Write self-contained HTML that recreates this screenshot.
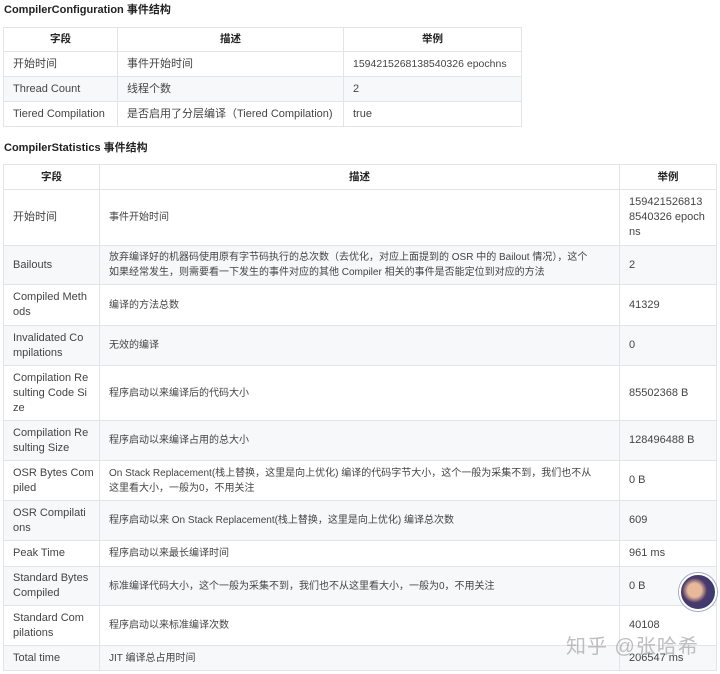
<!DOCTYPE html>
<html><head><meta charset="utf-8"><style>
body{margin:0;background:#fff;width:720px;height:674px;overflow:hidden;position:relative;font-family:"Liberation Sans","Noto Sans CJK SC",sans-serif;color:#444;font-size:11px}
.t{position:absolute;left:4px;font-weight:bold;font-size:11px;color:#222}
table{position:absolute;border-collapse:collapse;table-layout:fixed}
td,th{border:1px solid #e1e4e8;padding:0 9px;line-height:15px;vertical-align:middle;overflow:hidden;white-space:nowrap}
th{font-weight:bold;text-align:center;font-size:10.5px;color:#222}
.g{background:#f6f8fa}
.d{font-size:10px}
</style></head><body>
<div class="t" style="top:1px">CompilerConfiguration 事件结构</div>
<table style="left:3px;top:27px;width:518px">
<col style="width:114px"><col style="width:226px"><col style="width:178px">
<tr style="height:24px"><th>字段</th><th>描述</th><th>举例</th></tr>
<tr style="height:25px"><td>开始时间</td><td>事件开始时间</td><td style="font-size:10.5px">1594215268138540326 epochns</td></tr>
<tr style="height:25px" class="g"><td>Thread Count</td><td>线程个数</td><td>2</td></tr>
<tr style="height:25px"><td>Tiered Compilation</td><td>是否启用了分层编译（Tiered Compilation)</td><td>true</td></tr>
</table>
<div class="t" style="top:139px">CompilerStatistics 事件结构</div>
<table style="left:3px;top:164px;width:713px">
<col style="width:96px"><col style="width:520px"><col style="width:97px">
<tr style="height:25px"><th>字段</th><th>描述</th><th>举例</th></tr>
<tr style="height:56px"><td>开始时间</td><td class="d">事件开始时间</td><td>159421526813<br>8540326 epoch<br>ns</td></tr>
<tr style="height:39px" class="g"><td>Bailouts</td><td class="d">放弃编译好的机器码使用原有字节码执行的总次数（去优化，对应上面提到的 OSR 中的 Bailout 情况），这个<br>如果经常发生，则需要看一下发生的事件对应的其他 Compiler 相关的事件是否能定位到对应的方法</td><td>2</td></tr>
<tr style="height:41px"><td>Compiled Meth<br>ods</td><td class="d">编译的方法总数</td><td>41329</td></tr>
<tr style="height:40px" class="g"><td>Invalidated Co<br>mpilations</td><td class="d">无效的编译</td><td>0</td></tr>
<tr style="height:55px"><td>Compilation Re<br>sulting Code Si<br>ze</td><td class="d">程序启动以来编译后的代码大小</td><td>85502368 B</td></tr>
<tr style="height:40px" class="g"><td>Compilation Re<br>sulting Size</td><td class="d">程序启动以来编译占用的总大小</td><td>128496488 B</td></tr>
<tr style="height:40px"><td>OSR Bytes Com<br>piled</td><td class="d">On Stack Replacement(栈上替换，这里是向上优化) 编译的代码字节大小，这个一般为采集不到，我们也不从<br>这里看大小，一般为0，不用关注</td><td>0 B</td></tr>
<tr style="height:40px" class="g"><td>OSR Compilati<br>ons</td><td class="d">程序启动以来 On Stack Replacement(栈上替换，这里是向上优化) 编译总次数</td><td>609</td></tr>
<tr style="height:26px"><td>Peak Time</td><td class="d">程序启动以来最长编译时间</td><td>961 ms</td></tr>
<tr style="height:39px" class="g"><td>Standard Bytes<br>Compiled</td><td class="d">标准编译代码大小，这个一般为采集不到，我们也不从这里看大小，一般为0，不用关注</td><td>0 B</td></tr>
<tr style="height:40px"><td>Standard Com<br>pilations</td><td class="d">程序启动以来标准编译次数</td><td>40108</td></tr>
<tr style="height:25px" class="g"><td>Total time</td><td class="d">JIT 编译总占用时间</td><td>206547 ms</td></tr>
</table>
<div style="position:absolute;left:679px;top:573px;width:34px;height:34px;border-radius:50%;background:radial-gradient(circle at 40% 45%,#e8b89a 0 25%,#4a3a6a 45%,#2a3a7a 100%);border:2px solid #fff;box-shadow:0 0 0 1px #9ab"></div>
<div style="position:absolute;left:566px;top:630px;font-size:20px;color:rgba(170,170,170,0.75);letter-spacing:1px">知乎 @张哈希</div>
</body></html>
